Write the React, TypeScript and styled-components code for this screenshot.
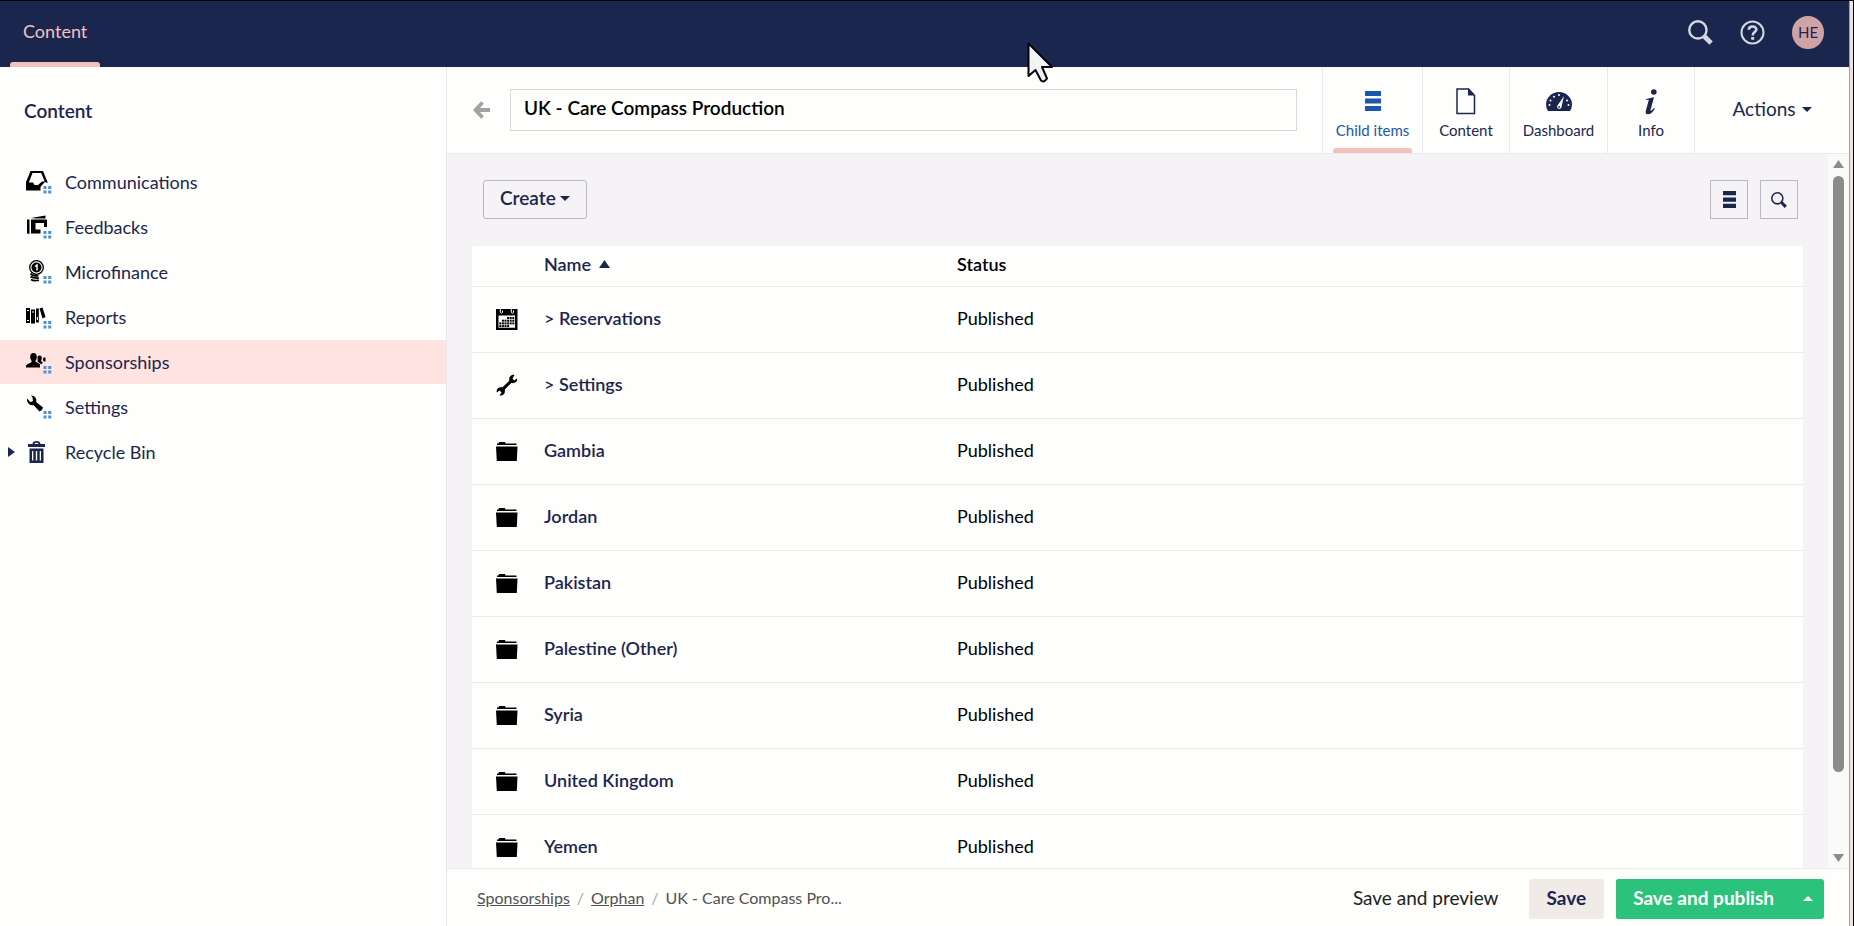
import React from "react";
import styled, { createGlobalStyle } from "styled-components";

const navy = "#1b264f";
const pink = "#f5c1bc";
const line = "#e9e9eb";

const Global = createGlobalStyle`
  * { box-sizing: border-box; }
  html, body, #root { height: 100%; }
  body {
    margin: 0;
    overflow: hidden;
    background: #fefefd;
    color: ${navy};
    font-family: Lato, "Liberation Sans", sans-serif;
    font-size: 18px;
    line-height: 24px;
  }
  button, input { font: inherit; color: inherit; }
  button { cursor: pointer; }
  a { color: inherit; }
`;

const Frame = styled.div`
  height: 100vh;
  display: flex;
  border-top: 1px solid #000;
  border-right: 1px solid #000;
  background: #efe2e1;
`;

const Shell = styled.div`
  flex: 1;
  min-width: 0;
  margin-right: 3px;
  border-right: 1px solid #a39fa3;
  display: flex;
  flex-direction: column;
  background: #fefefd;
`;

const TopBar = styled.header`
  flex: none;
  height: 66px;
  background: ${navy};
  display: flex;
  justify-content: space-between;
  padding: 0 25px 0 10px;
`;

const SectionLink = styled.a`
  display: flex;
  flex-direction: column;
  justify-content: space-between;
  padding-top: 18px;
  color: ${pink};
  text-decoration: none;
  span { padding: 0 13px; }
  &::after {
    content: "";
    height: 5px;
    border-radius: 3px 3px 0 0;
    background: ${pink};
  }
`;

const TopTools = styled.div`
  display: flex;
  align-items: center;
  gap: 27px;
  padding-bottom: 3px;
`;

const PlainButton = styled.button`
  border: 0;
  padding: 0;
  background: none;
  display: flex;
  align-items: center;
  justify-content: center;
`;

const Avatar = styled(PlainButton)`
  width: 32px;
  height: 33px;
  padding-bottom: 2px;
  border-radius: 50%;
  background: #cfa3a6;
  color: ${navy};
  font-size: 15px;
  line-height: 20px;
`;

const Main = styled.div`
  flex: 1;
  min-height: 0;
  display: flex;
`;

const Sidebar = styled.nav`
  flex: none;
  width: 447px;
  border-right: 1px solid ${line};
`;

const SidebarTitle = styled.h2`
  margin: 0;
  padding: 32px 24px 0;
  font-size: 19px;
  line-height: 24px;
  font-weight: 600;
`;

const Tree = styled.ul`
  list-style: none;
  margin: 0;
  padding: 37px 0 0;
  display: grid;
  gap: 1px;
`;

const TreeRow = styled.a<{ $active?: boolean }>`
  height: 44px;
  display: grid;
  grid-template-columns: 10px 26px 1fr;
  column-gap: 8px;
  align-items: center;
  padding-left: 8px;
  text-decoration: none;
  background: ${(p) => (p.$active ? "#fee3e1" : "transparent")};
  svg { display: block; }
  span { padding-left: 5px; }
`;

const Editor = styled.main`
  flex: 1;
  min-width: 0;
  display: flex;
  flex-direction: column;
`;

const EditorHead = styled.div`
  flex: none;
  height: 87px;
  display: flex;
  border-bottom: 1px solid ${line};
`;

const TitleArea = styled.div`
  flex: 1;
  display: flex;
  align-items: center;
  gap: 20px;
  padding: 0 25px 0 26px;
`;

const TitleInput = styled.input`
  flex: 1;
  min-width: 0;
  height: 42px;
  border: 1px solid #d8d7d9;
  background: #fefefd;
  padding: 0 13px 5px;
  color: #000;
  font-size: 19px;
  font-weight: 600;
  outline: 0;
`;

const ViewTab = styled.button<{ $active?: boolean; $wide: number }>`
  position: relative;
  width: ${(p) => p.$wide}px;
  border: 0;
  border-left: 1px solid ${line};
  background: none;
  padding: 7px 0 0;
  display: flex;
  flex-direction: column;
  align-items: center;
  justify-content: center;
  gap: 5px;
  font-size: 15px;
  line-height: 20px;
  color: ${(p) => (p.$active ? "#1b58ad" : navy)};
  &::after {
    content: "";
    display: ${(p) => (p.$active ? "block" : "none")};
    position: absolute;
    left: 10px;
    right: 10px;
    bottom: 0;
    height: 5px;
    border-radius: 3px 3px 0 0;
    background: ${pink};
  }
`;

const ActionsButton = styled(PlainButton)`
  width: 155px;
  border-left: 1px solid ${line};
  padding-bottom: 2px;
  gap: 6px;
  font-size: 19px;
`;

const Scroller = styled.div`
  flex: 1;
  min-height: 0;
  display: flex;
  background: #f5f3f5;
`;

const ListView = styled.div`
  flex: 1;
  min-width: 0;
  overflow: hidden;
  padding: 25px 25px 0;
`;

const Toolbar = styled.div`
  display: flex;
  align-items: center;
  justify-content: space-between;
  height: 41px;
  padding: 0 5px 0 11px;
  margin-bottom: 26px;
`;

const ToolGroup = styled.div`
  display: flex;
  align-items: center;
  gap: 12px;
`;

const OutlineButton = styled(PlainButton)`
  height: 39px;
  padding: 0 16px 3px;
  gap: 4px;
  border: 1px solid #b9b7c4;
  border-radius: 3px;
  font-size: 19px;
  font-weight: 600;
`;

const IconButton = styled(PlainButton)`
  width: 38px;
  height: 39px;
  border: 1px solid #b9b7c4;
`;

const Table = styled.table`
  width: 100%;
  border-collapse: collapse;
  table-layout: fixed;
  background: #fefefd;
  border-radius: 3px 3px 0 0;
  color: #000;
`;

const HeadCell = styled.th<{ $wide?: string }>`
  width: ${(p) => p.$wide ?? "auto"};
  height: 40px;
  padding: 0 0 3px;
  text-align: left;
  font-weight: 600;
  border-bottom: 1px solid ${line};
  button { font-weight: 600; gap: 8px; color: ${navy}; }
`;

const Cell = styled.td`
  height: 66px;
  padding: 0 0 2px;
  border-bottom: 1px solid ${line};
  svg { display: block; margin: 2px 0 0 24px; }
`;

const NameLink = styled.a`
  color: ${navy};
  font-weight: 600;
  text-decoration: none;
`;

const ScrollTrack = styled.div`
  width: 21px;
  background: #fafafa;
  display: flex;
  flex-direction: column;
  align-items: center;
  padding: 6px 0 6px;
  gap: 8px;
`;

const ScrollThumb = styled.div`
  width: 11px;
  flex: 9;
  border-radius: 6px;
  background: #8b8b8b;
`;

const ScrollRest = styled.div`
  flex: 1;
`;

const Footer = styled.footer`
  flex: none;
  height: 58px;
  border-top: 1px solid ${line};
  display: flex;
  align-items: center;
  justify-content: space-between;
  padding: 2px 25px 0 30px;
`;

const Crumbs = styled.ol`
  list-style: none;
  display: flex;
  margin: 0;
  padding: 0 0 2px;
  font-size: 16px;
  line-height: 20px;
  color: #515054;
  li + li::before {
    content: "/";
    padding: 0 7px;
    color: #a9a8ac;
  }
`;

const FootButton = styled(PlainButton)<{ $kind: "link" | "soft" | "go" }>`
  height: 40px;
  padding: 0 ${(p) => (p.$kind === "go" ? 17 : 18)}px 2px;
  border-radius: 3px;
  font-size: 19px;
  font-weight: ${(p) => (p.$kind === "link" ? 400 : 700)};
  color: ${(p) => (p.$kind === "go" ? "#fff" : p.$kind === "soft" ? navy : "#222")};
  background: ${(p) => (p.$kind === "go" ? "#2bc37c" : p.$kind === "soft" ? "#f1ebe8" : "transparent")};
`;

const PublishGroup = styled.div`
  display: flex;
  background: #2bc37c;
  border-radius: 3px;
`;

const PublishMore = styled(PlainButton)`
  width: 33px;
  color: #fff;
`;

const Pointer = styled.svg`
  position: fixed;
  left: 1027px;
  top: 42px;
`;

const Light = styled.span`
  display: flex;
  color: #d5d7e0;
`;

const Grey = styled.span`
  display: flex;
  color: #8b8b8b;
`;

const Glyph = styled.span`
  height: 27px;
  display: flex;
  align-items: center;
`;

const Caret = ({ dir = "down", w = 10, h = 5 }: { dir?: string; w?: number; h?: number }) => (
  <svg width={w} height={h} viewBox="0 0 10 6" preserveAspectRatio="none" fill="currentColor" aria-hidden>
    <path d={dir === "up" ? "M0 6L5 0L10 6Z" : "M0 0H10L5 6Z"} />
  </svg>
);

const Search = ({ size }: { size: number }) => (
  <svg width={size} height={size} viewBox="0 0 24 24" fill="none" stroke="currentColor" aria-hidden>
    <circle cx="9.500" cy="9.500" r="8.300" strokeWidth="2.300" />
    <path d="M15 15l2 2" strokeWidth="2.600" />
    <path d="M15.800 15.800l6.400 6.400" strokeWidth="4.600" />
  </svg>
);

const Bars = ({ w, h }: { w: number; h: number }) => (
  <svg width={w} height={h} viewBox="0 0 16 20" preserveAspectRatio="none" fill="currentColor" aria-hidden>
    <path d="M0 0H16V5H0ZM0 7.5H16V12.500H0ZM0 15H16V20H0Z" />
  </svg>
);

const glyphs: Record<string, React.ReactNode> = {
  tray: (
    <path fillRule="evenodd" d="M4.500 1H17L21.500 12V13L19 12L17 14L14.500 17V20.500H0V12ZM6.500 3L2.800 12.500H7L8.500 15H12L16 11.500H18.700L15.200 3Z" />
  ),
  feedback: (
    <path fillRule="evenodd" d="M5 3L19.500 .5V3.500H10ZM1 4.500L3.500 4.500V19L1 18.500ZM5 4.500H21V12H18V8H9.500V14.500H14.500V18.500H5Z" />
  ),
  coin: (
    <g fill="none" stroke="#000">
      <circle cx="10.500" cy="7.500" r="6.800" strokeWidth="1.300" />
      <circle cx="10.500" cy="7.500" r="5" fill="#000" stroke="none" />
      <path d="M9 6.500L11 5V10.500" stroke="#fff" strokeWidth="1.500" />
      <path d="M4.500 13.500C6 16 10 16 12.500 16M4.500 16.500C7 18.500 10 18 13 18M5 19.500C8 21.500 11 20 13 20.500" strokeWidth="1.700" />
    </g>
  ),
  books: (
    <g>
      <path fillRule="evenodd" d="M0 3H4V18H0ZM1 5V6H3V5ZM1 15V16H3V15ZM5 4.500H9V18.500H5ZM6 6.500V7.500H8V6.500ZM10 3.500H12.800V17.500H10ZM10.800 12V15H12V12Z" />
      <path d="M13.500 3.500L16.500 2.500L19.500 12L16.500 13.500Z" />
    </g>
  ),
  people: (
    <path d="M7.500 3C10 3 11 5 10.800 7.500C10.600 9.500 9.500 10 9.500 11.500C10.500 12.500 13 13 14 14.500V17.500H0V16C.5 13.500 5 13.500 5.700 11.500C5.500 10 4.300 9.500 4.200 7.500C4 5 5 3 7.500 3ZM13.500 5.500C15.500 5.500 16 7 15.800 8.500L15 11L17 12.500L15 14.500C14 12.500 12 12.500 11.500 11.500C12 10.500 11.500 9 11.500 8C11.500 6.500 12 5.500 13.500 5.500ZM17.500 7.500H19.500V11.500H18L16.800 10Z" />
  ),
  spanner: (
    <path d="M1 3.500L4.500 7L7 6L6.500 2.500L5 .5C9 .5 11 3.500 10.200 7L17 12.500L16 15L13.500 16.500L7.500 10C4 11 .5 8 1 3.500Z" />
  ),
};

const BlueDots = () => (
  <path fill="#4c8fdc" d="M17.500 16H20.500V19H17.500ZM22.200 16H25.200V19H22.200ZM17.500 20.500H20.500V23.500H17.500ZM22.200 20.500H25.200V23.500H22.200Z" />
);

const TreeIcon = ({ name }: { name: string }) => (
  <svg width="26" height="24" viewBox="0 0 26 24" aria-hidden>
    {name === "bin" ? (
      <path
        fill={navy}
        fillRule="evenodd"
        d="M2 4H6.500C6.500 2 8 1 10.500 1S14.500 2 14.500 4H19V7H2ZM8.500 4H12.500C12.500 2.300 8.500 2.300 8.500 4ZM3.500 8.500H17.500V23H3.500ZM6 11V20.500H7.300V11ZM9.800 11V20.500H11.200V11ZM13.700 11V20.500H15V11Z"
      />
    ) : (
      <>
        {glyphs[name]}
        <BlueDots />
      </>
    )}
  </svg>
);

const calendarDays = [
  { y: 9, from: 3, to: 6 },
  { y: 11.7, from: 1, to: 6 },
  { y: 14.4, from: 0, to: 6 },
  { y: 17.1, from: 0, to: 4 },
];

const RowIcon = ({ name }: { name: string }) => (
  <svg width="22" height="22" viewBox="0 0 22 22" aria-hidden>
    {name === "calendar" && (
      <>
        <path fillRule="evenodd" d="M0 1H21.500V22H0ZM2.500 7.500V19.800H19V7.500Z" />
        <path d="M4.300 0V4.500Q5.500 6 6.500 4.500V2.500M15.300 0V4.500Q16.500 6 17.500 4.500V2.500" stroke="#fff" strokeWidth="1" fill="none" />
        {calendarDays.map((row) =>
          Array.from({ length: row.to - row.from }, (_, i) => (
            <rect key={`${row.y}-${i}`} x={3.3 + (row.from + i) * 2.6} y={row.y} width="2" height="2" />
          ))
        )}
      </>
    )}
    {name === "wrench" && (
      <path d="M21 4.500L18 6.500L16.500 4.500L18.500 .8C15 .3 12.500 3 13.300 6.800L6.500 13.300C3 12.500 0 14.500 .8 18.500L3.500 16.500L5.500 18.200L3.500 21.500C7.500 22 9.500 19.500 8.800 15.500L15.300 9C19 9.800 21.800 7.500 21 4.500Z" />
    )}
    {name === "folder" && (
      <>
        <path d="M1 5V3.500H2.500L3 2H9L9.500 3.500H20.500V5Z" />
        <path d="M0 6.500H21.500L20.800 21H.8Z" />
      </>
    )}
  </svg>
);

const tree = [
  { icon: "tray", label: "Communications" },
  { icon: "feedback", label: "Feedbacks" },
  { icon: "coin", label: "Microfinance" },
  { icon: "books", label: "Reports" },
  { icon: "people", label: "Sponsorships", active: true },
  { icon: "spanner", label: "Settings" },
  { icon: "bin", label: "Recycle Bin", expandable: true },
];

const rows = [
  { icon: "calendar", name: "> Reservations" },
  { icon: "wrench", name: "> Settings" },
  { icon: "folder", name: "Gambia" },
  { icon: "folder", name: "Jordan" },
  { icon: "folder", name: "Pakistan" },
  { icon: "folder", name: "Palestine (Other)" },
  { icon: "folder", name: "Syria" },
  { icon: "folder", name: "United Kingdom" },
  { icon: "folder", name: "Yemen" },
];

const DocIcon = () => (
  <svg width="20" height="27" viewBox="0 0 20 27" aria-hidden>
    <path d="M1 1H12.500L18.500 7.500V25.500H1Z" fill="none" stroke="currentColor" strokeWidth="1.500" />
    <path d="M12 0L19 7.500H12Z" fill="currentColor" />
  </svg>
);

const GaugeIcon = () => (
  <svg width="26" height="27" viewBox="0 0 26 27" aria-hidden>
    <path fill="currentColor" d="M2 23Q0 20 0 16.500A13 12.500 0 0 1 26 16.500Q26 20 24 23Z" />
    <path fill="#fff" d="M18 8L15.500 19A2.200 2.200 0 1 1 11.500 17.500Z" />
    <g fill="#fff">
      <circle cx="3.500" cy="17" r="1" /><circle cx="4.500" cy="12.500" r="1" /><circle cx="8" cy="8.700" r="1" />
      <circle cx="13" cy="7" r="1" /><circle cx="21" cy="12.500" r="1" /><circle cx="22.500" cy="17" r="1" />
    </g>
    <circle cx="13.200" cy="19" r=".9" fill="currentColor" />
  </svg>
);

const InfoIcon = () => (
  <svg width="14" height="27" viewBox="0 0 14 27" fill="currentColor" aria-hidden>
    <circle cx="9.800" cy="4" r="2.800" />
    <path d="M2 11L10 9.300L6.500 22C6.300 23.500 8 22.500 10 20L10.800 20.700C8 25 6 26.300 3.800 26.300C1.500 26.300 1.300 24.500 2 22L4.700 12.500C4.800 11.500 3.500 11.800 2 12Z" />
  </svg>
);

const HelpIcon = () => (
  <svg width="25" height="25" viewBox="0 0 25 25" fill="none" stroke="currentColor" aria-hidden>
    <circle cx="12.500" cy="12.500" r="11" strokeWidth="2" />
    <path d="M8.800 9.800C8.800 5.500 16.300 5.500 16.300 9.500C16.300 12.200 12.700 12 12.700 15.500" strokeWidth="2.600" />
    <path d="M12.700 17V19.800" strokeWidth="3" />
  </svg>
);

export default function App() {
  return (
    <Frame>
      <Global />
      <Shell>
        <TopBar>
          <SectionLink href="#content"><span>Content</span></SectionLink>
          <TopTools>
            <PlainButton aria-label="Search"><Light><Search size={25} /></Light></PlainButton>
            <PlainButton aria-label="Help"><Light><HelpIcon /></Light></PlainButton>
            <Avatar>HE</Avatar>
          </TopTools>
        </TopBar>
        <Main>
          <Sidebar>
            <SidebarTitle>Content</SidebarTitle>
            <Tree>
              {tree.map((t) => (
                <li key={t.label}>
                  <TreeRow href="#node" $active={t.active}>
                    {t.expandable ? (
                      <svg width="7" height="10" viewBox="0 0 7 10" fill={navy} aria-hidden><path d="M0 0L7 5L0 10Z" /></svg>
                    ) : (
                      <i />
                    )}
                    <TreeIcon name={t.icon} />
                    <span>{t.label}</span>
                  </TreeRow>
                </li>
              ))}
            </Tree>
          </Sidebar>
          <Editor>
            <EditorHead>
              <TitleArea>
                <PlainButton aria-label="Back">
                  <svg width="17" height="18" viewBox="0 0 17 18" fill="none" stroke="#a3a2a3" aria-hidden>
                    <path d="M9.500 1.500L2.500 9L9.500 16.500M3 9H17" strokeWidth="3.800" />
                  </svg>
                </PlainButton>
                <TitleInput aria-label="Name" defaultValue="UK - Care Compass Production" />
              </TitleArea>
              <ViewTab $active $wide={100}><Glyph><Bars w={16} h={20} /></Glyph>Child items</ViewTab>
              <ViewTab $wide={87}><Glyph><DocIcon /></Glyph>Content</ViewTab>
              <ViewTab $wide={98}><Glyph><GaugeIcon /></Glyph>Dashboard</ViewTab>
              <ViewTab $wide={87}><Glyph><InfoIcon /></Glyph>Info</ViewTab>
              <ActionsButton>Actions <Caret /></ActionsButton>
            </EditorHead>
            <Scroller>
              <ListView>
                <Toolbar>
                  <OutlineButton>Create <Caret /></OutlineButton>
                  <ToolGroup>
                    <IconButton aria-label="List layout"><Bars w={13} h={17} /></IconButton>
                    <IconButton aria-label="Search items"><Search size={16} /></IconButton>
                  </ToolGroup>
                </Toolbar>
                <Table>
                  <thead>
                    <tr>
                      <HeadCell $wide="72px" aria-label="Type" />
                      <HeadCell $wide="413px"><PlainButton>Name <Caret dir="up" w={11} h={8} /></PlainButton></HeadCell>
                      <HeadCell>Status</HeadCell>
                    </tr>
                  </thead>
                  <tbody>
                    {rows.map((r) => (
                      <tr key={r.name}>
                        <Cell><RowIcon name={r.icon} /></Cell>
                        <Cell><NameLink href="#item">{r.name}</NameLink></Cell>
                        <Cell>Published</Cell>
                      </tr>
                    ))}
                  </tbody>
                </Table>
              </ListView>
              <ScrollTrack>
                <Grey><Caret dir="up" w={11} h={8} /></Grey>
                <ScrollThumb />
                <ScrollRest />
                <Grey><Caret w={11} h={8} /></Grey>
              </ScrollTrack>
            </Scroller>
            <Footer>
              <Crumbs>
                <li><a href="#sponsorships">Sponsorships</a></li>
                <li><a href="#orphan">Orphan</a></li>
                <li>UK - Care Compass Pro...</li>
              </Crumbs>
              <ToolGroup>
                <FootButton $kind="link">Save and preview</FootButton>
                <FootButton $kind="soft">Save</FootButton>
                <PublishGroup>
                  <FootButton $kind="go">Save and publish</FootButton>
                  <PublishMore aria-label="More publishing options"><Caret dir="up" /></PublishMore>
                </PublishGroup>
              </ToolGroup>
            </Footer>
          </Editor>
        </Main>
      </Shell>
      <Pointer width="28" height="42" viewBox="0 0 28 42" aria-hidden>
        <path d="M1.500 1.500V34L8.500 28L14 38.500Q17 41 20 36.500L15 25H25Z" fill="#f4f4f6" stroke="#050508" strokeWidth="2" strokeLinejoin="round" />
      </Pointer>
    </Frame>
  );
}
